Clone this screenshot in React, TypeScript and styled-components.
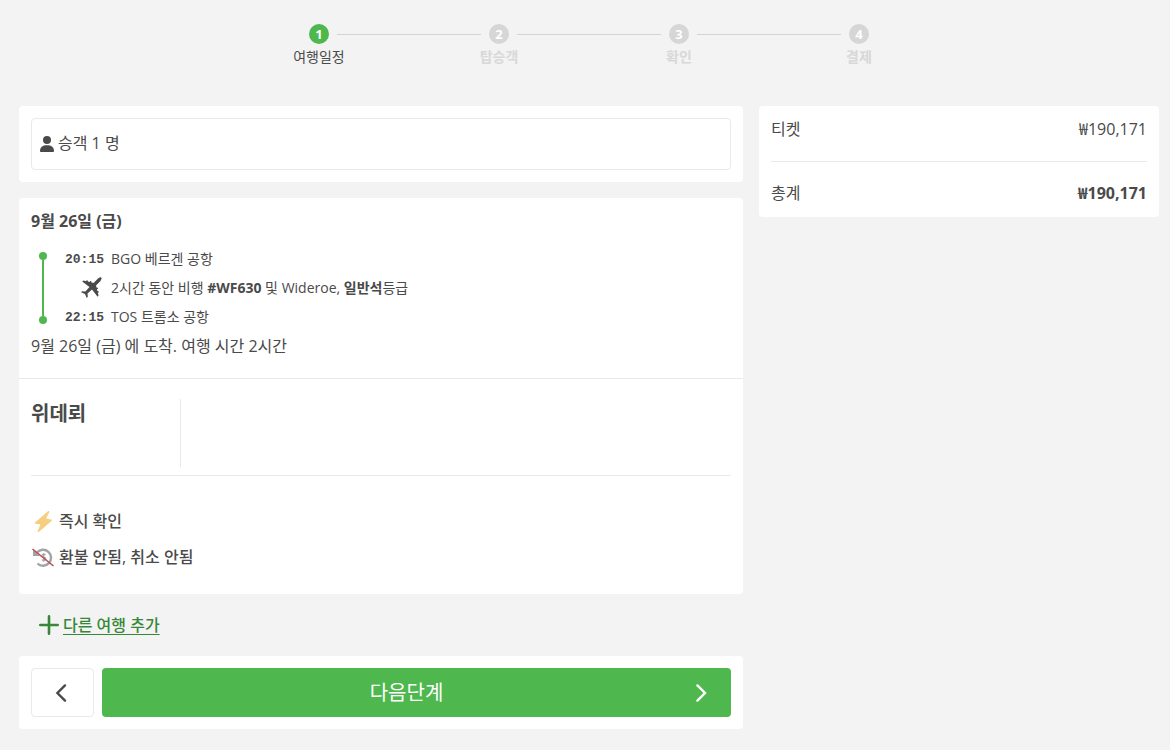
import React from "react";
import styled, { createGlobalStyle } from "styled-components";

const color = {
  page: "#f3f3f3",
  card: "#ffffff",
  text: "#4a4a4a",
  muted: "#d8d8d8",
  line: "#e9e9e9",
  green: "#4eb84e",
  link: "#388738",
};

const GlobalStyle = createGlobalStyle`
  *, *::before, *::after { box-sizing: border-box; }
  body {
    margin: 0;
    background: ${color.page};
    color: ${color.text};
    font-family: "Open Sans", "Noto Sans CJK KR", sans-serif;
    font-size: 16px;
    line-height: 24px;
  }
  h2, h3, p, ol, ul, dl, dd { margin: 0; padding: 0; }
  ol, ul { list-style: none; }
  button { font: inherit; color: inherit; cursor: pointer; }
`;

const Page = styled.div`
  padding: 24px 11px 21px 19px;
`;

const Steps = styled.ol`
  display: flex;
  max-width: 720px;
  margin: 0 auto 36px;
`;

const Step = styled.li<{ $active?: boolean }>`
  flex: 1;
  display: flex;
  flex-direction: column;
  align-items: center;
  font-size: 14px;
  line-height: 26px;
  font-weight: ${(p) => (p.$active ? 400 : 600)};
  color: ${(p) => (p.$active ? color.text : color.muted)};
`;

const StepTrack = styled.span`
  align-self: stretch;
  display: flex;
  align-items: center;
  gap: 8px;
`;

const StepRule = styled.span<{ $hidden?: boolean }>`
  flex: 1;
  height: 1px;
  background: ${(p) => (p.$hidden ? "transparent" : "#d3d3d3")};
`;

const StepNumber = styled.span<{ $active?: boolean }>`
  width: 20px;
  height: 20px;
  border-radius: 50%;
  display: grid;
  place-items: center;
  background: ${(p) => (p.$active ? color.green : "#d6d6d6")};
  color: #fff;
  font-size: 13px;
  line-height: 20px;
  font-weight: 700;
`;

const Columns = styled.div`
  display: grid;
  grid-template-columns: minmax(0, 1fr) 400px;
  gap: 16px;
  align-items: start;
`;

const Card = styled.section`
  background: ${color.card};
  border-radius: 4px;
  padding: 12px;
`;

const PassengerButton = styled.button`
  width: 100%;
  height: 52px;
  display: flex;
  align-items: center;
  gap: 4px;
  padding: 0 8px 2px;
  border: 1px solid ${color.line};
  border-radius: 4px;
  background: #fff;
`;

const TripCard = styled(Card)`
  margin-top: 16px;
  padding: 0;
`;

const Journey = styled.div`
  padding: 11px 12px 20px;
  border-bottom: 1px solid ${color.line};
`;

const JourneyDate = styled.h2`
  font-size: 16px;
  line-height: 24px;
  font-weight: 700;
`;

const Route = styled.div`
  display: flex;
  gap: 18px;
  margin: 13px 0 7px 8px;
`;

const RouteLine = styled.span`
  width: 8px;
  margin: 6px 0 3px;
  display: flex;
  flex-direction: column;
  align-items: center;
  &::before, &::after {
    content: "";
    width: 8px;
    height: 8px;
    border-radius: 50%;
    background: ${color.green};
  }
`;

const RouteBar = styled.span`
  flex: 1;
  width: 2px;
  background: ${color.green};
`;

const Stops = styled.ul`
  display: grid;
  grid-template-columns: 38px 1fr;
  column-gap: 8px;
  row-gap: 9px;
  padding-top: 3px;
  font-size: 14px;
  line-height: 20px;
`;

const Stop = styled.li`
  display: contents;
`;

const Time = styled.time`
  font-family: "Liberation Mono", monospace;
  font-size: 13px;
  line-height: 22px;
  height: 20px;
  font-weight: 700;
`;

const PlaneSvg = styled.svg`
  justify-self: end;
  width: 24px;
  height: 24px;
  margin: -2px 0;
`;

const Operator = styled.div`
  margin: 20px 12px 0;
  padding-bottom: 8px;
  border-bottom: 1px solid ${color.line};
`;

const OperatorName = styled.h3`
  width: 150px;
  height: 68px;
  border-right: 1px solid ${color.line};
  font-size: 20px;
  line-height: 30px;
  font-weight: 700;
`;

const Conditions = styled.ul`
  display: grid;
  gap: 12px;
  padding: 33px 12px 25px;
`;

const Condition = styled.li`
  display: flex;
  align-items: center;
  gap: 4px;
  font-weight: 500;
  svg { width: 24px; height: 24px; }
`;

const AddTrip = styled.a`
  display: inline-flex;
  align-items: center;
  gap: 4px;
  margin: 19px 0 19px 20px;
  color: ${color.link};
  font-weight: 500;
  text-decoration: none;
  span { text-decoration: underline; text-underline-offset: 3px; }
`;

const Actions = styled(Card)`
  display: flex;
  gap: 8px;
`;

const BackButton = styled.button`
  width: 63px;
  height: 49px;
  display: grid;
  place-items: center;
  padding: 0 4px 0 0;
  border: 1px solid ${color.line};
  border-radius: 4px;
  background: #fff;
`;

const NextButton = styled.button`
  flex: 1;
  height: 49px;
  display: flex;
  align-items: center;
  padding: 0 20px;
  border: 0;
  border-radius: 4px;
  background: ${color.green};
  color: #fff;
  font-size: 20px;
  span { flex: 1; }
`;

const Summary = styled.dl`
  background: ${color.card};
  border-radius: 4px;
  padding: 0 12px;
`;

const SummaryRow = styled.div<{ $total?: boolean }>`
  display: flex;
  justify-content: space-between;
  padding: ${(p) => (p.$total ? "19px 0 12px" : "11px 0 20px")};
  border-top: ${(p) => (p.$total ? `1px solid ${color.line}` : "0")};
  dd {
    font-weight: ${(p) => (p.$total ? 700 : 400)};
  }
`;

const steps = ["여행일정", "탑승객", "확인", "결제"];

function PersonIcon() {
  return (
    <svg width="14" height="18" viewBox="0 0 14 18" fill="currentColor" aria-hidden="true">
      <circle cx="7" cy="6" r="4" />
      <path d="M0 17.2C0 13 2.6 11.2 7 11.2S14 13 14 17.2Q14 18 13.2 18H.8Q0 18 0 17.2Z" />
    </svg>
  );
}

function PlaneIcon() {
  return (
    <PlaneSvg viewBox="0 0 24 24" fill="currentColor" aria-hidden="true">
      <path d="M19 2.5Q21.6.8 22.4 1.6 23.2 2.4 21.5 5L17 9.5 17.5 11.5 18.8 11.7 19 13 17.9 13.1 18.4 15 19.6 15.3 19.7 16.6 18.8 16.7 19.6 19.6 18.6 20.8 13 13.5 8.5 17.6 8.8 20.8 7.7 22 6 18 2 16.3 3.2 15.2 6.4 15.5 10.5 11 3.2 5.4 4.4 4.4 7.3 5.2 7.4 4.3 8.7 4.4 9 5.6 10.9 6.1 11 5 12.3 5.2 12.5 6.5 14.5 7Z" />
    </PlaneSvg>
  );
}

function Chevron({ left = false }: { left?: boolean }) {
  return (
    <svg width="20" height="20" viewBox="0 0 20 20" fill="none" stroke="currentColor" strokeWidth="2.4" strokeLinecap="round" aria-hidden="true">
      <path d={left ? "M14 2.4 6.4 10 14 17.6" : "M6.4 2.4 14 10 6.4 17.6"} />
    </svg>
  );
}

function BoltIcon() {
  return (
    <svg viewBox="0 0 24 24" fill="#f4cf80" stroke="#f4cf80" strokeWidth="1.6" strokeLinejoin="round" aria-hidden="true">
      <path d="M17.5 2.8 4.5 14 10.5 14.7 7.5 22.2 20 11.3 13.8 10.1Z" />
    </svg>
  );
}

function NoRefundIcon() {
  return (
    <svg viewBox="0 0 24 24" fill="none" aria-hidden="true">
      <path d="M6 7.5A8 8 0 1 1 6.5 18.5" stroke="#a3a3a3" strokeWidth="2.4" />
      <path d="M2 4.5V11H9Z" fill="#a3a3a3" />
      <path d="M14.5 10C13.2 8.8 10.5 9.2 11 10.9 11.5 12.4 14.8 12 14.8 13.8 14.8 15.6 12 15.8 10.8 14.6M12.8 8V16.8" stroke="#a3a3a3" strokeWidth="1.2" />
      <path d="M1.5 4 22.5 21" stroke="#b95055" strokeWidth="1.6" />
    </svg>
  );
}

function PlusIcon() {
  return (
    <svg width="20" height="20" viewBox="0 0 20 20" fill="none" stroke="currentColor" strokeWidth="2.6" strokeLinecap="round" aria-hidden="true">
      <path d="M10 1.3V18.7M1.3 10H18.7" />
    </svg>
  );
}

export default function App() {
  return (
    <>
      <GlobalStyle />
      <Page>
        <Steps>
          {steps.map((label, i) => (
            <Step key={label} $active={i === 0} aria-current={i === 0 ? "step" : undefined}>
              <StepTrack>
                <StepRule $hidden={i === 0} />
                <StepNumber $active={i === 0}>{i + 1}</StepNumber>
                <StepRule $hidden={i === steps.length - 1} />
              </StepTrack>
              {label}
            </Step>
          ))}
        </Steps>
        <Columns>
          <main>
            <Card>
              <PassengerButton type="button">
                <PersonIcon />
                <span>승객 1 명</span>
              </PassengerButton>
            </Card>
            <TripCard>
              <Journey>
                <JourneyDate>9월 26일 (금)</JourneyDate>
                <Route>
                  <RouteLine>
                    <RouteBar />
                  </RouteLine>
                  <Stops>
                    <Stop>
                      <Time>20:15</Time>
                      <span>BGO 베르겐 공항</span>
                    </Stop>
                    <Stop>
                      <PlaneIcon />
                      <span>
                        2시간 동안 비행 <b>#WF630</b> 및 Wideroe, <b>일반석</b>등급
                      </span>
                    </Stop>
                    <Stop>
                      <Time>22:15</Time>
                      <span>TOS 트롬소 공항</span>
                    </Stop>
                  </Stops>
                </Route>
                <p>9월 26일 (금) 에 도착. 여행 시간 2시간</p>
              </Journey>
              <Operator>
                <OperatorName>위데뢰</OperatorName>
              </Operator>
              <Conditions>
                <Condition>
                  <BoltIcon />
                  즉시 확인
                </Condition>
                <Condition>
                  <NoRefundIcon />
                  환불 안됨, 취소 안됨
                </Condition>
              </Conditions>
            </TripCard>
            <AddTrip href="#add">
              <PlusIcon />
              <span>다른 여행 추가</span>
            </AddTrip>
            <Actions>
              <BackButton type="button" aria-label="이전">
                <Chevron left />
              </BackButton>
              <NextButton type="button">
                <span>다음단계</span>
                <Chevron />
              </NextButton>
            </Actions>
          </main>
          <aside>
            <Summary>
              <SummaryRow>
                <dt>티켓</dt>
                <dd>₩190,171</dd>
              </SummaryRow>
              <SummaryRow $total>
                <dt>총계</dt>
                <dd>₩190,171</dd>
              </SummaryRow>
            </Summary>
          </aside>
        </Columns>
      </Page>
    </>
  );
}
